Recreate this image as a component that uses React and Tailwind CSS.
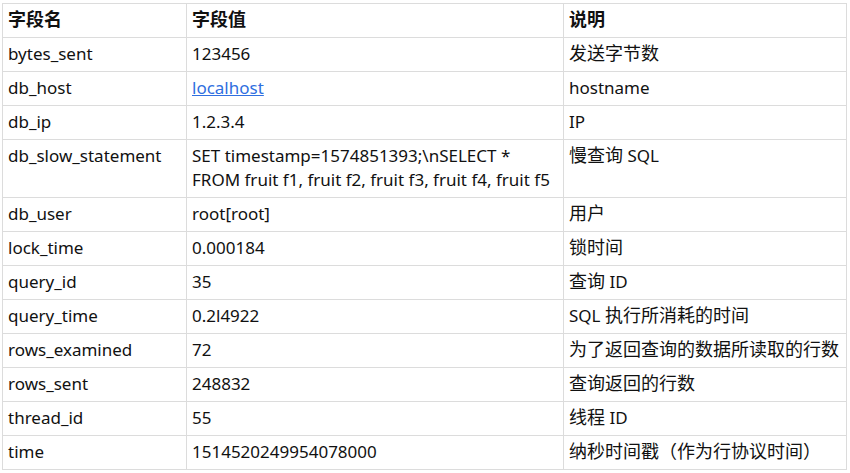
const rows = [
  ['bytes_sent', '123456', '发送字节数'],
  ['db_host', 'localhost', 'hostname', true],
  ['db_ip', '1.2.3.4', 'IP'],
  ['db_slow_statement', ['SET timestamp=1574851393;\\nSELECT *', 'FROM fruit f1, fruit f2, fruit f3, fruit f4, fruit f5'], '慢查询 SQL'],
  ['db_user', 'root[root]', '用户'],
  ['lock_time', '0.000184', '锁时间'],
  ['query_id', '35', '查询 ID'],
  ['query_time', '0.2l4922', 'SQL 执行所消耗的时间'],
  ['rows_examined', '72', '为了返回查询的数据所读取的行数'],
  ['rows_sent', '248832', '查询返回的行数'],
  ['thread_id', '55', '线程 ID'],
  ['time', '1514520249954078000', '纳秒时间戳（作为行协议时间）'],
]

const cell = 'px-[5px] pt-[4px] pb-[5px] leading-6 whitespace-nowrap'

// CJK runs read a touch larger than the latin text in the shot
function Mixed({ text }) {
  return text.split(/([\u3000-\u9fff\uff00-\uffef]+)/).map((part, i) =>
    i % 2 ? <span key={i} className="text-[18px] leading-none">{part}</span> : part
  )
}

export default function App() {
  return (
    <div className="min-h-screen bg-white pl-[2px] pt-[3px] text-[17px] text-[#111]" style={{ fontFamily: '"Noto Sans", "Noto Sans CJK SC", sans-serif' }}>
      <div className="w-[845px] border border-[#dcdcdc]">
        <div className="grid grid-cols-[184px_377px_282px] font-bold">
          <div className={cell + ' border-r border-[#dcdcdc]'}><Mixed text="字段名" /></div>
          <div className={cell + ' border-r border-[#dcdcdc]'}><Mixed text="字段值" /></div>
          <div className={cell}><Mixed text="说明" /></div>
        </div>
        {rows.map(([name, value, desc, link]) => (
          <div key={name} className="grid grid-cols-[184px_377px_282px] border-t border-[#dcdcdc]">
            <div className={cell + ' border-r border-[#dcdcdc]'}>{name}</div>
            <div className={cell + ' border-r border-[#dcdcdc]'}>
              {Array.isArray(value) ? (
                value.map((line) => <div key={line}>{line}</div>)
              ) : link ? (
                <a href="#" className="text-[#2f6fe0] underline">{value}</a>
              ) : (
                value
              )}
            </div>
            <div className={cell}><Mixed text={desc} /></div>
          </div>
        ))}
      </div>
    </div>
  )
}
